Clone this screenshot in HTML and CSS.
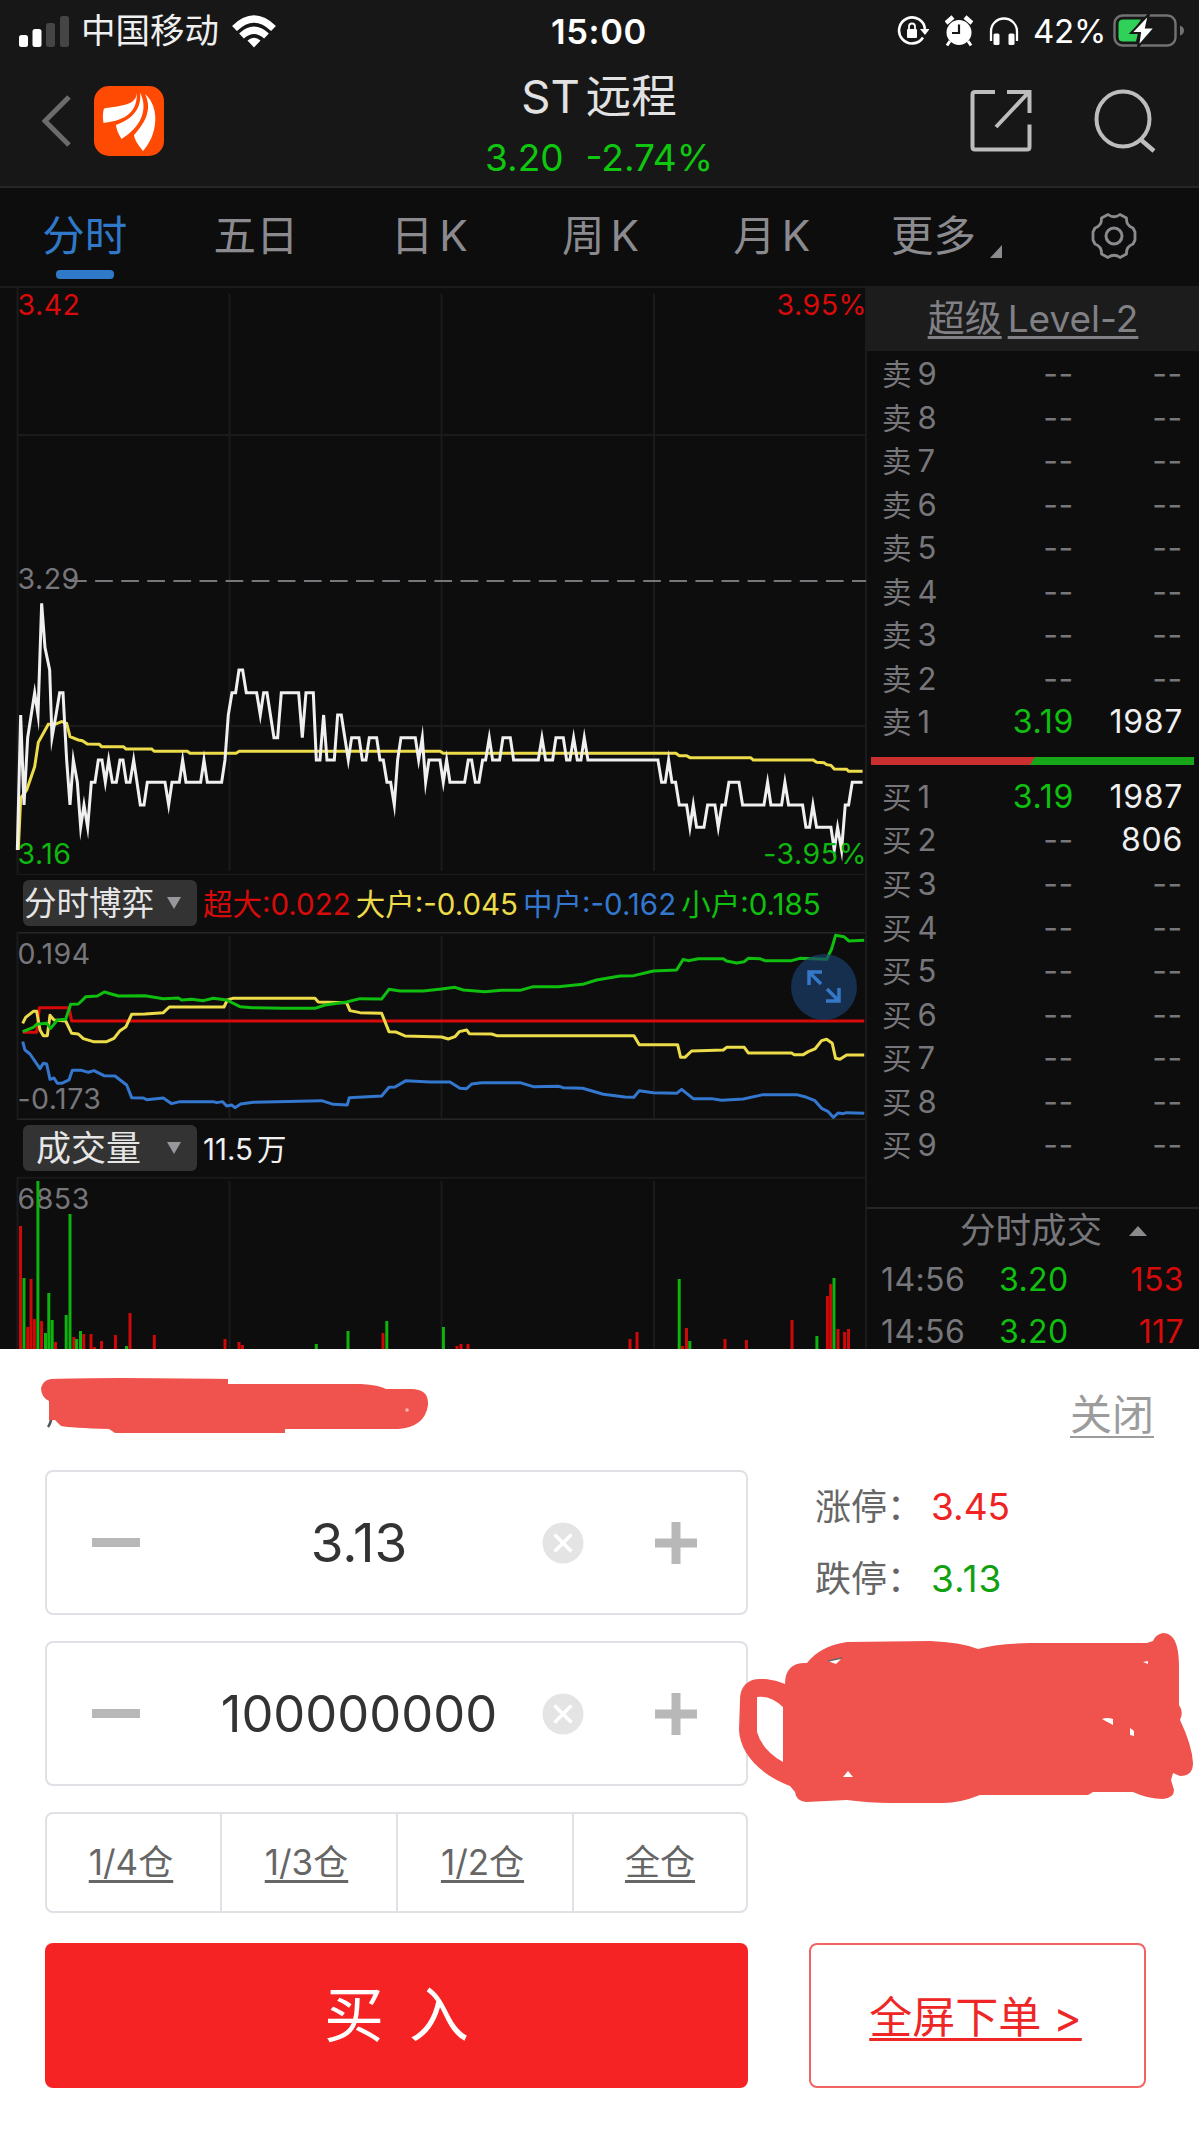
FILE: index.html
```html
<!DOCTYPE html>
<html lang="zh-CN">
<head>
  <meta charset="utf-8">
  <title>ST远程</title>
  <link rel="stylesheet" href="styles.css">
</head>
<body>
  <!-- 顶部：状态栏 + 标题 -->
  <div class="top">
    <div class="status">
      <div class="status-left">
        <svg width="50" height="32" viewBox="0 0 50 32">
          <rect x="0" y="20" width="9" height="12" rx="2.5" fill="#fff"/>
          <rect x="13.5" y="14" width="9" height="18" rx="2.5" fill="#fff"/>
          <rect x="27" y="8" width="9" height="24" rx="2.5" fill="#454545"/>
          <rect x="41" y="1" width="9" height="31" rx="2.5" fill="#454545"/>
        </svg>
        <span class="carrier">中国移动</span>
        <svg width="44" height="33" viewBox="0 0 44 33">
          <g fill="none" stroke="#fff" stroke-width="7">
            <path d="M2.5 13.5Q22 -5.500 41.500 13.500"/>
            <path d="M9.500 21Q22 9.500 34.500 21"/>
          </g>
          <path d="M15.500 25.500Q22 20 28.500 25.500L22 32.500Z" fill="#fff"/>
        </svg>
      </div>
      <div class="clock">15:00</div>
      <div class="status-right">
        <svg width="32" height="32" viewBox="0 0 32 32">
          <path d="M26 22.500A13 13 0 1 1 28 14" fill="none" stroke="#fff" stroke-width="2.600"/>
          <path d="M23 14H32.500L28 20Z" fill="#fff"/>
          <rect x="10" y="14" width="10" height="9" rx="1" fill="#fff"/>
          <path d="M12 14.500V11.500A3 3 0 0 1 18 11.500V14.500" fill="none" stroke="#fff" stroke-width="1.800"/>
        </svg>
        <svg class="alarm" width="28" height="32" viewBox="0 0 28 32">
          <circle cx="14" cy="17.500" r="12.500" fill="#fff"/>
          <path d="M1 8L8 2M20 2L27 8" stroke="#fff" stroke-width="4.500"/>
          <path d="M5 26L2 30.500M23 26L26 30.500" stroke="#fff" stroke-width="3"/>
          <path d="M14 9.500V18H7" fill="none" stroke="#171717" stroke-width="2.200"/>
        </svg>
        <svg class="phones" width="30" height="30" viewBox="0 0 30 30">
          <path d="M2 25V15.500A13 13 0 0 1 28 15.500V25" fill="none" stroke="#fff" stroke-width="2.300"/>
          <rect x="4.500" y="17.500" width="6" height="11.500" rx="1.500" fill="#fff"/>
          <rect x="19.500" y="17.500" width="6" height="11.500" rx="1.500" fill="#fff"/>
        </svg>
        <span class="percent">42%</span>
        <svg width="72" height="34" viewBox="0 0 72 34">
          <rect x="1.500" y="1.500" width="61" height="30" rx="8" fill="none" stroke="#727272" stroke-width="2.400"/>
          <path d="M67 11.500Q71 13 71 16.500T67 21.500Z" fill="#727272"/>
          <path d="M10 5.500H28L19 19H25L23 27.500H10Q5.500 27.500 5.500 23V10Q5.500 5.500 10 5.500Z" fill="#30d158"/>
          <path d="M36 0L18 19H27L25 33L42 13.500H33Z" fill="#fff" stroke="#171717" stroke-width="2"/>
        </svg>
      </div>
    </div>
    <div class="titlebar">
      <div class="title-left">
        <svg width="30" height="52" viewBox="0 0 30 52">
          <path d="M27 2L3 26L27 50" fill="none" stroke="#6b6b6b" stroke-width="5"/>
        </svg>
        <svg class="logo" width="70" height="70" viewBox="0 0 70 70">
          <rect width="70" height="70" rx="15" fill="#ff4a04"/>
          <path d="M43 6.500C42 18 33 19 10 22.500Q8 28 9.500 37C34 34 43 25 43 6.500Z" fill="#fff"/>
          <path d="M46 6.500C48 22 39 33 22 39Q22.500 45 27.500 53C46 42 55 24 46 6.500Z" fill="#fff"/>
          <path d="M51 8C59 24 50 38 40 49Q40 54 49 65C63 50 67 22 51 8Z" fill="#fff"/>
        </svg>
      </div>
      <div class="stock">
        <div class="stock-name">ST<span>远程</span></div>
        <div class="stock-price"><span>3.20</span><span>-2.74%</span></div>
      </div>
      <div class="title-right">
        <svg width="62" height="64" viewBox="0 0 62 64">
          <path d="M25 3H5Q2.500 3 2.500 5.500V58Q2.500 60.500 5 60.500H57Q59.500 60.500 59.500 58V35.500M37 3H59.500V24M59 3L26 38" fill="none" stroke="#bdbdbd" stroke-width="4"/>
        </svg>
        <svg width="62" height="64" viewBox="0 0 62 64">
          <ellipse cx="29" cy="30" rx="26.500" ry="27.500" fill="none" stroke="#bdbdbd" stroke-width="4"/>
          <path d="M46 50L60 62" stroke="#bdbdbd" stroke-width="4.500"/>
        </svg>
      </div>
    </div>
  </div>

  <div class="tabs">
    <div class="tab active">分时</div>
    <div class="tab">五日</div>
    <div class="tab">日<i>K</i></div>
    <div class="tab">周<i>K</i></div>
    <div class="tab">月<i>K</i></div>
    <div class="tab more">更多<svg width="12" height="13" viewBox="0 0 12 13"><path d="M12 0V13H0Z" fill="#8a8a8f"/></svg></div>
    <div class="tab">
      <svg width="48" height="48" viewBox="0 0 48 48">
        <path d="M18 2.500Q24 7 30 2.500L36.500 6Q36 13.500 43 16L45 20V28L43 32Q36 34.500 36.500 42L30 45.500Q24 41 18 45.500L11.500 42Q12 34.500 5 32L3 28V20L5 16Q12 13.500 11.500 6Z" fill="none" stroke="#8a8a8f" stroke-width="2.800" stroke-linejoin="round"/>
        <circle cx="24" cy="24" r="8" fill="none" stroke="#8a8a8f" stroke-width="3"/>
      </svg>
    </div>
  </div>

  <div class="quote">
    <div class="charts">
      <!-- 分时走势 -->
      <svg class="chart" width="867" height="589" viewBox="0 0 867 589">
        <path class="grid" d="M0 1H867M17 149H866M17 440H866M17 589H866M17.500 0V589M229.500 8V585M441.500 8V585M654 8V585M866 0V589"/>
        <text class="gray" x="17.500" y="303">3.29</text>
        <path d="M69 295H866" stroke="#77777b" stroke-width="2" stroke-dasharray="17.700 8.400"/>
        <g transform="translate(0 294) scale(.3333)">
          <polyline class="avg" points="55,810 62,655 80,630 104,560 115,487 145,433 165,433 185,425 200,430 210,470 235,480 247,482 262,492 298,493 305,500 370,500 378,507 455,507 463,514 562,514 570,520 708,520 718,514 1320,514 1330,520 2028,520 2038,527 2060,527 2070,533 2252,533 2260,540 2440,540 2450,547 2472,548 2480,554 2493,556 2503,567 2540,568 2546,574 2588,574"/>
          <polyline class="price" points="52,810 62,405 72,675 83,473 104,338 114,405 125,70 135,203 149,270 156,473 168,405 179,338 189,338 200,540 210,675 220,540 232,607 242,742 252,675 263,742 274,607 285,607 295,540 306,540 316,607 326,540 337,607 349,607 360,540 369,540 379,607 390,607 401,540 411,607 421,675 432,675 442,607 495,607 506,675 516,607 538,607 548,540 558,607 602,607 612,540 622,607 665,607 675,540 685,405 696,338 707,338 717,270 728,270 739,338 770,338 781,405 791,338 801,338 822,473 833,473 844,338 896,338 907,473 918,338 940,338 949,540 960,540 971,405 981,540 1003,540 1013,405 1024,405 1045,540 1055,473 1077,473 1087,540 1098,540 1108,473 1130,473 1140,540 1150,540 1161,607 1172,607 1183,675 1193,540 1203,473 1246,473 1256,540 1267,473 1277,607 1287,540 1320,540 1330,607 1340,540 1350,607 1394,607 1405,540 1415,540 1426,607 1437,607 1448,540 1457,540 1468,473 1478,540 1499,540 1509,473 1531,473 1541,540 1615,540 1626,473 1637,540 1658,540 1668,473 1690,473 1700,540 1710,540 1721,473 1732,540 1743,540 1753,473 1764,540 1974,540 1985,607 1996,607 2006,540 2016,607 2027,607 2038,675 2060,675 2070,742 2080,675 2090,742 2112,742 2123,675 2145,675 2155,742 2166,675 2176,675 2187,607 2217,607 2228,675 2292,675 2303,607 2313,675 2345,675 2355,607 2366,675 2408,675 2418,742 2429,742 2439,675 2450,742 2493,742 2503,810 2513,742 2525,810 2536,675 2546,675 2557,607 2588,607"/>
        </g>
        <text class="up" x="17.500" y="29">3.42</text>
        <text class="up end" x="867" y="29">3.95%</text>
        <text class="down" x="17.500" y="578">3.16</text>
        <text class="down end" x="867" y="578">-3.95%</text>
      </svg>

      <div class="bar">
        <div class="pick">分时博弈<svg width="14" height="12" viewBox="0 0 14 12"><path d="M0 0H14L7 12Z" fill="#97979c"/></svg></div>
        <div class="legend">
          <span class="red">超大:0.022</span>
          <span class="yellow">大户:-0.045</span>
          <span class="blue">中户:-0.162</span>
          <span class="green">小户:0.185</span>
        </div>
      </div>

      <!-- 分时博弈 -->
      <svg class="chart" width="867" height="188" viewBox="0 0 867 188">
        <path class="grid strong" d="M17 0.500H866M17 187.500H866"/>
        <path class="grid" d="M17.500 0V188M229.500 4V186M441.500 4V186M654 4V186M866 0V188"/>
        <text class="gray" x="17.500" y="32">0.194</text>
        <text class="gray" x="17.500" y="177">-0.173</text>
        <g transform="translate(0 -62) scale(.3333)">
          <polyline class="flow" stroke="#d80a0a" points="68,487 110,487 118,413 207,413 215,453 2593,453"/>
          <polyline class="flow" stroke="#ecdc4a" points="68,460 77,442 100,424 110,424 120,480 130,497 142,497 150,436 162,450 197,453 215,490 235,492 250,506 280,515 320,515 342,505 360,482 378,470 395,433 435,432 490,428 508,411 672,411 682,390 698,385 945,385 955,396 1040,398 1050,422 1080,428 1145,430 1167,485 1187,486 1215,498 1325,501 1345,507 1365,500 1378,485 1400,480 1408,491 1475,492 1490,497 1902,497 1918,524 2033,524 2042,562 2055,562 2075,543 2170,540 2180,532 2233,532 2245,549 2375,549 2382,554 2410,554 2425,545 2445,537 2465,512 2480,508 2497,520 2507,565 2520,568 2540,555 2593,555"/>
          <polyline class="flow" stroke="#0fbe0f" points="68,485 100,472 110,463 140,460 152,475 172,450 197,448 212,403 235,402 258,380 292,378 313,366 355,378 435,377 490,386 535,384 545,390 575,388 610,392 640,385 680,390 720,410 758,413 850,415 945,415 975,405 1040,396 1080,386 1145,387 1167,358 1200,363 1270,363 1325,357 1365,352 1390,360 1455,365 1505,361 1560,361 1600,350 1675,350 1748,343 1790,330 1860,318 1902,317 1960,303 2030,300 2050,268 2065,272 2095,266 2170,266 2180,273 2210,279 2233,275 2245,265 2280,266 2295,272 2375,272 2400,265 2480,268 2495,237 2507,196 2532,200 2547,213 2593,211"/>
          <polyline class="flow" stroke="#3377cf" points="68,515 75,540 90,552 120,596 130,580 140,582 150,628 162,624 172,640 185,640 207,630 217,601 245,601 265,607 282,602 312,617 345,618 380,645 395,683 430,684 440,689 490,684 515,701 540,695 640,695 650,698 668,695 680,708 695,705 705,713 722,702 760,697 965,692 1000,703 1042,705 1048,683 1145,678 1167,652 1185,651 1218,632 1290,636 1350,636 1380,655 1400,656 1415,642 1445,638 1560,638 1600,650 1675,649 1690,653 1748,655 1810,673 1875,681 1902,682 1918,662 1960,668 2030,670 2045,658 2080,686 2135,686 2165,691 2230,687 2290,674 2390,674 2420,682 2445,692 2465,715 2485,725 2500,742 2515,729 2530,731 2540,728 2593,730"/>
        </g>
        <circle cx="824" cy="55" r="33" fill="#1c3f6e" fill-opacity=".68"/>
        <path d="M821 52L809 40M809 53V40H822M827 57L839 69M839 56V69H826" fill="none" stroke="#3478c8" stroke-width="3.500"/>
      </svg>

      <div class="bar">
        <div class="pick volume">成交量<svg width="14" height="12" viewBox="0 0 14 12"><path d="M0 0H14L7 12Z" fill="#97979c"/></svg></div>
        <div class="legend white"><span>11.5<b>万</b></span></div>
      </div>

      <!-- 成交量 -->
      <svg class="chart" width="867" height="172" viewBox="0 0 867 172">
        <path class="grid" d="M17 0.500H866M17.500 0V172M229.500 4V172M441.500 4V172M654 4V172M866 0V172"/>
        <text class="gray" x="17.500" y="32">6853</text>
        <path stroke="#cf0808" stroke-width="3" d="M20.500 49V172M27.700 150V172M31 102V172M34.400 142V172M41.600 144V172M55.500 165V172M73.800 160V172M83.800 157V172M91 157V172M94.500 170V172M101.500 164V172M115.400 158V172M130 136V172M154.300 158V172M225 162V172M239 165V172M242.500 168V172M383 156V172M457 169V172M461 167V172M468 167V172M630 162V172M637 155V172M682.500 169V172M686.500 151V172M725 162V172M746.400 163V172M792 143V172M827.400 119V172M830.700 107V172M838 152V172M844.600 155V172M848.500 152V172"/>
        <path stroke="#0db40d" stroke-width="3" d="M24 101V172M37.900 4V172M45.500 156V172M48.800 116V172M52.200 143V172M66.200 138V172M70 37V172M76.600 162V172M80.500 154V172M126.500 169V172M316.300 167V172M348 154V172M386.800 144V172M443.400 150V172M679.200 102V172M689.800 164V172M816.900 159V172M834 101V172"/>
      </svg>
    </div>

    <!-- 买卖盘口 -->
    <div class="book">
      <div class="level2"><span>超级<em>Level-2</em></span></div>
      <div class="orders sell">
        <div class="order"><span>卖<i>9</i></span><span>--</span><span>--</span></div>
        <div class="order"><span>卖<i>8</i></span><span>--</span><span>--</span></div>
        <div class="order"><span>卖<i>7</i></span><span>--</span><span>--</span></div>
        <div class="order"><span>卖<i>6</i></span><span>--</span><span>--</span></div>
        <div class="order"><span>卖<i>5</i></span><span>--</span><span>--</span></div>
        <div class="order"><span>卖<i>4</i></span><span>--</span><span>--</span></div>
        <div class="order"><span>卖<i>3</i></span><span>--</span><span>--</span></div>
        <div class="order"><span>卖<i>2</i></span><span>--</span><span>--</span></div>
        <div class="order"><span>卖<i>1</i></span><span class="green">3.19</span><span class="white">1987</span></div>
      </div>
      <div class="ratio"></div>
      <div class="orders">
        <div class="order"><span>买<i>1</i></span><span class="green">3.19</span><span class="white">1987</span></div>
        <div class="order"><span>买<i>2</i></span><span>--</span><span class="white">806</span></div>
        <div class="order"><span>买<i>3</i></span><span>--</span><span>--</span></div>
        <div class="order"><span>买<i>4</i></span><span>--</span><span>--</span></div>
        <div class="order"><span>买<i>5</i></span><span>--</span><span>--</span></div>
        <div class="order"><span>买<i>6</i></span><span>--</span><span>--</span></div>
        <div class="order"><span>买<i>7</i></span><span>--</span><span>--</span></div>
        <div class="order"><span>买<i>8</i></span><span>--</span><span>--</span></div>
        <div class="order"><span>买<i>9</i></span><span>--</span><span>--</span></div>
      </div>
      <div class="deals-title">分时成交<svg width="18" height="10" viewBox="0 0 18 10"><path d="M0 10H18L9 0Z" fill="#8a8a8f"/></svg></div>
      <div class="deal"><span>14:56</span><span class="green">3.20</span><span class="red">153</span></div>
      <div class="deal"><span>14:56</span><span class="green">3.20</span><span class="red">117</span></div>
    </div>
  </div>

  <!-- 下单面板 -->
  <div class="trade">
    <div class="trade-head">
      <svg width="392" height="60" viewBox="0 0 392 60">
        <path d="M7 50Q10 46 11 38" fill="none" stroke="#555" stroke-width="2.500"/>
        <path d="M10 2Q60 0 187 2V7H320Q338 8 345 12H370Q388 12 387 28Q384 50 357 52H244V56H74L68 52Q30 51 20 49L14 43H8V24Q0 20 0 11Q2 3 10 2Z" fill="#f0534d"/>
        <circle cx="366" cy="33" r="1.800" fill="#f9b5b0"/>
      </svg>
      <span class="close">关闭</span>
    </div>
    <div class="trade-body">
      <div class="form">
        <div class="stepper">
          <svg width="48" height="9" viewBox="0 0 48 9"><rect width="48" height="9" fill="#b8b8b8"/></svg>
          <span class="value">3.13</span>
          <svg class="clear" width="42" height="42" viewBox="0 0 42 42"><circle cx="21" cy="21" r="20.500" fill="#e4e4e4"/><path d="M12.500 12.500L29.500 29.500M29.500 12.500L12.500 29.500" stroke="#fff" stroke-width="3.500"/></svg>
          <svg width="42" height="42" viewBox="0 0 42 42"><path d="M21 0V42M0 21H42" stroke="#b8b8b8" stroke-width="9"/></svg>
        </div>
        <div class="stepper">
          <svg width="48" height="9" viewBox="0 0 48 9"><rect width="48" height="9" fill="#b8b8b8"/></svg>
          <span class="value amount">100000000</span>
          <svg class="clear" width="42" height="42" viewBox="0 0 42 42"><circle cx="21" cy="21" r="20.500" fill="#e4e4e4"/><path d="M12.500 12.500L29.500 29.500M29.500 12.500L12.500 29.500" stroke="#fff" stroke-width="3.500"/></svg>
          <svg width="42" height="42" viewBox="0 0 42 42"><path d="M21 0V42M0 21H42" stroke="#b8b8b8" stroke-width="9"/></svg>
        </div>
        <div class="parts">
          <span>1/4仓</span>
          <span>1/3仓</span>
          <span>1/2仓</span>
          <span>全仓</span>
        </div>
        <div class="buy">买 入</div>
      </div>
      <div class="side">
        <div class="limit">涨停：<span class="limit-up">3.45</span></div>
        <div class="limit">跌停：<span class="limit-down">3.13</span></div>
        <svg class="scribble" width="456" height="172" viewBox="738 1632 456 172">
          <path fill="#f0534d" fill-rule="evenodd" d="M785 1684C775 1680 768 1679 760 1679C748 1679 740 1686 740 1700L739 1730C740 1755 763 1776 790 1786L795 1792Q796 1801 806 1802L847 1800Q870 1803 890 1803H943Q960 1803 980 1795H1088L1093 1792H1133Q1148 1799 1163 1799Q1174 1798 1174 1790L1171 1780L1173 1773L1180 1776Q1193 1776 1193 1763Q1192 1745 1180 1720Q1184 1712 1179 1705V1665C1179 1645 1174 1633 1163 1633Q1156 1634 1153 1641L1147 1643H1030Q995 1644 978 1649Q960 1642 930 1641L847 1642Q820 1646 807 1663Q785 1662 785 1684ZM757 1697Q770 1695 783 1707V1762Q762 1750 757 1732Z"/>
          <path fill="#fff" d="M1102 1719Q1107 1717 1113 1719V1725ZM1130 1728L1134 1731V1736L1130 1735ZM843 1777L848 1771L853 1777ZM828 1661L842 1658L836 1664ZM1143 1662L1148 1661V1664Z"/>
          <path d="M828 1661L842 1658" stroke="#666" stroke-width="1.500"/>
        </svg>
        <div class="full"><span>全屏下单 &gt;</span></div>
      </div>
    </div>
  </div>
</body>
</html>
```

FILE: styles.css
```css
* {
    box-sizing: border-box;
}

body {
    margin: 0;
    width: 1199px;
    height: 2133px;
    overflow: hidden;
    background-color: #fff;
    font-family: Inter, "Noto Sans CJK SC", sans-serif;
}

svg {
    display: block;
    flex-shrink: 0;
}

i, em, b {
    font-style: normal;
    font-weight: inherit;
}

.red { color: #d80a0a; }
.green { color: #0fc00f; }
.yellow { color: #ecdc4a; }
.blue { color: #3377cf; }
.white { color: #f0f0f0; }

/* 顶部 */
.top {
    height: 188px;
    background-color: #171717;
    border-bottom: 2px solid #262626;
}

.status {
    display: grid;
    grid-template-columns: 1fr auto 1fr;
    align-items: center;
    height: 60px;
    padding: 0 14px 0 19px;
    color: #fff;
}

.status-left, .status-right {
    display: flex;
    align-items: center;
}

.status-left {
    gap: 13px;
}

.status-right {
    justify-content: flex-end;
}

.carrier {
    font-size: 34.5px;
    line-height: 62px;
    margin-left: -1px;
    color: #f0f0f0;
}

.clock {
    font-size: 34.5px;
    font-weight: 600;
    letter-spacing: 0.6px;
    margin-left: -6px;
}

.alarm {
    margin-left: 16px;
}

.phones {
    margin-left: 16px;
}

.percent {
    font-size: 33px;
    margin: 0 7px 0 14px;
    letter-spacing: -0.3px;
}

.titlebar {
    display: grid;
    grid-template-columns: 1fr auto 1fr;
    height: 126px;
    padding: 0 43px 0 42px;
}

.title-left, .title-right {
    display: flex;
    align-items: center;
    height: 122px;
}

.title-left {
    gap: 22px;
}

.title-right {
    justify-content: flex-end;
    gap: 62px;
}

.stock {
    text-align: center;
}

.stock-name {
    font-size: 45.5px;
    line-height: 60px;
    margin-top: 7px;
    color: #e2e2e2;
}

.stock-name span {
    margin-left: 6px;
}

.stock-price {
    display: flex;
    justify-content: center;
    gap: 22px;
    font-size: 37px;
    line-height: 62px;
    color: #0fc70f;
}

/* 周期切换 */
.tabs {
    display: grid;
    grid-template-columns: repeat(7, 1fr);
    height: 98px;
    background-color: #0d0d0d;
    color: #8a8a8f;
    font-size: 42.5px;
}

.tab {
    display: flex;
    justify-content: center;
    align-items: center;
    position: relative;
    line-height: 96px;
    height: 96px;
    padding-right: 2px;
}

.tab i {
    margin-left: 6px;
}

.active {
    color: #3078c8;
}

.active::after {
    content: "";
    position: absolute;
    left: 56px;
    top: 82px;
    width: 58px;
    height: 9px;
    border-radius: 4px;
    background-color: #3078c8;
}

.tab:nth-child(n+3) {
    padding: 0 0 0 2px;
}

.tab.more {
    padding-left: 9px;
}

.more svg {
    align-self: flex-end;
    margin: 0 0 26px 14px;
}

/* 行情区 */
.quote {
    display: grid;
    grid-template-columns: 867px 1fr;
    height: 1063px;
    overflow: hidden;
    background-color: #0d0d0d;
}

.chart text {
    font-size: 28.5px;
    letter-spacing: 0.5px;
}

.chart .gray { fill: #77777b; }
.chart .up { fill: #d80a0a; }
.chart .down { fill: #0fb80f; }
.chart .end { text-anchor: end; }

.grid {
    fill: none;
    stroke: #1b1b1c;
    stroke-width: 2;
}

.strong {
    stroke: #262627;
}

.avg {
    fill: none;
    stroke: #ecdc4a;
    stroke-width: 9;
}

.price {
    fill: none;
    stroke: #f0f0f0;
    stroke-width: 9;
    stroke-miterlimit: 12;
}

.flow {
    fill: none;
    stroke-width: 9;
    stroke-linejoin: round;
}

.bar {
    display: flex;
    align-items: center;
    height: 57px;
    padding-left: 23px;
    border-right: 2px solid #1b1b1c;
}

.pick {
    display: flex;
    align-items: center;
    justify-content: space-between;
    width: 174px;
    height: 46px;
    margin-top: -1px;
    padding: 0 16px 0 1px;
    border-radius: 6px;
    background-color: #333;
    color: #e6e6e6;
    font-size: 32.5px;
    line-height: 49px;
}

.volume {
    padding-left: 13px;
    font-size: 35px;
}

.legend {
    display: flex;
    gap: 5px;
    margin-top: -3px;
    padding-left: 6px;
    font-size: 29.5px;
    white-space: nowrap;
}

.legend b {
    margin-left: 4px;
}

/* 盘口 */
.book {
    color: #77777b;
}

.level2 {
    height: 65px;
    padding-top: 3px;
    background-color: #1c1c1c;
    text-align: center;
    font-size: 37px;
    line-height: 60px;
    color: #808085;
    text-decoration: underline;
    text-decoration-thickness: 3px;
    text-underline-offset: 4px;
    text-decoration-skip-ink: none;
}

.level2 em {
    margin-left: 6px;
}

.sell {
    padding-top: 1px;
}

.order {
    display: grid;
    grid-template-columns: 107px 85px 109px;
    padding-left: 15px;
    height: 43.55px;
    line-height: 43.55px;
    font-size: 32px;
}

.order span + span {
    text-align: right;
    letter-spacing: 0.7px;
}

.order span:first-child {
    font-size: 29.5px;
}

.order i {
    margin-left: 6px;
    font-size: 31px;
}

.ratio {
    height: 8px;
    margin: 13px 5px 10px 4px;
    background: linear-gradient(120deg, #c92f2f 50%, #17a617 50%);
}

.deals-title {
    display: flex;
    justify-content: flex-end;
    align-items: center;
    gap: 27px;
    height: 47px;
    margin-top: 40px;
    padding-right: 52px;
    border-top: 2px solid #262627;
    font-size: 35.5px;
    line-height: 44px;
}

.deal {
    display: grid;
    grid-template-columns: 118px 84px 101px;
    padding-left: 14px;
    height: 52.5px;
    line-height: 52.5px;
    font-size: 32px;
    letter-spacing: 0.4px;
}

.deal span:last-child {
    text-align: right;
}

/* 下单面板 */
.trade {
    height: 784px;
    padding: 28px 45px 0 45px;
    background-color: #fff;
}

.trade-head {
    display: flex;
    justify-content: space-between;
    height: 93px;
    margin-left: -4px;
}

.close {
    height: 61px;
    color: #9c9c9c;
    font-size: 42px;
    line-height: 76px;
    border-bottom: 2px solid #9c9c9c;
}

.trade-body {
    display: flex;
    gap: 61px;
}

.form {
    width: 703px;
}

.stepper {
    display: flex;
    align-items: center;
    height: 145px;
    margin-bottom: 26px;
    padding: 0 49px 0 45px;
    border: 2px solid #e0e0e6;
    border-radius: 8px;
}

.value {
    flex: 1;
    text-align: center;
    color: #333;
    font-size: 53px;
    padding-left: 36px;
}

.amount {
    font-size: 50.7px;
}

.clear {
    margin-right: 71px;
}

.parts {
    display: grid;
    grid-template-columns: 173px 176px 176px 1fr;
    height: 101px;
    margin-bottom: 30px;
    border: 2px solid #e0e0e6;
    border-radius: 8px;
    color: #666;
    font-size: 35px;
    line-height: 96px;
    text-align: center;
    text-decoration: underline;
    text-decoration-thickness: 3px;
    text-underline-offset: 5px;
}

.parts span:not(:last-child) {
    padding-right: 5px;
}

.parts span + span {
    border-left: 2px solid #e0e0e6;
}

.buy {
    height: 145px;
    border-radius: 8px;
    background-color: #f52323;
    color: #fff;
    font-size: 60px;
    line-height: 145px;
    text-align: center;
    word-spacing: 8px;
}

.side {
    width: 337px;
}

.limit {
    height: 72px;
    padding-left: 6px;
    color: #666;
    font-size: 36px;
    line-height: 74px;
    white-space: nowrap;
}

.limit-up, .limit-down {
    margin-left: 8px;
    font-size: 37px;
    color: #f02323;
}

.limit-down {
    color: #12a012;
    letter-spacing: 1px;
}

.scribble {
    margin: 18px 0 139px -71px;
    position: relative;
}

.full {
    height: 145px;
    padding-right: 4px;
    border: 2px solid #f26464;
    border-radius: 8px;
    color: #ee2626;
    font-size: 43px;
    text-align: center;
    line-height: 145px;
    text-decoration: underline;
    text-decoration-thickness: 3px;
    text-underline-offset: 5px;
}
```
